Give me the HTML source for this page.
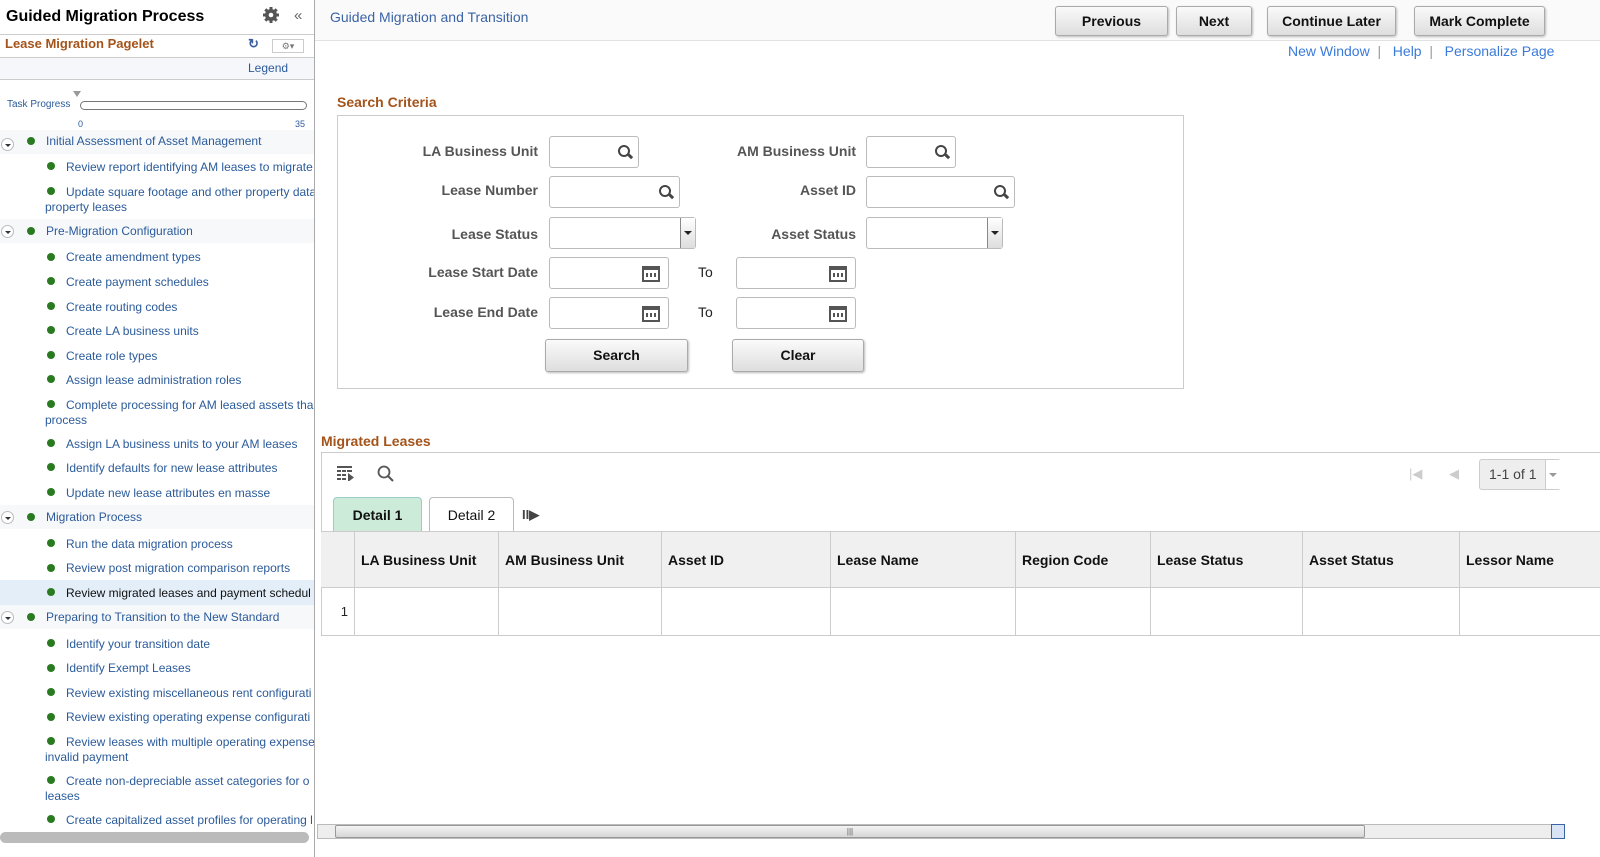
<!DOCTYPE html>
<html><head><meta charset="utf-8"><style>
*{box-sizing:border-box;margin:0;padding:0}
body{width:1600px;height:857px;position:relative;overflow:hidden;font-family:"Liberation Sans",Arial,sans-serif;background:#fff;color:#333}
.a{position:absolute}
.lt{font-size:12px;color:#2b5b9a;position:absolute;white-space:nowrap}
.dot{position:absolute;width:8px;height:8px;border-radius:50%;background:#2a7a22}
.sec{position:absolute;left:0;width:314px;height:24px;background:#f7f8fa}
.tog{position:absolute;left:1px;width:13px;height:13px;border:1px solid #bbb;border-radius:50%;background:#fff}
.tog:after{content:"";position:absolute;left:3px;top:5px;border-left:3px solid transparent;border-right:3px solid transparent;border-top:3px solid #333}
.btn{position:absolute;height:30px;border:1px solid #aaa;border-radius:3px;background:linear-gradient(#fafafa,#dedede);font-weight:bold;font-size:14px;color:#111;text-align:center;line-height:28px;box-shadow:1px 1px 2px #bbb}
.lbl{position:absolute;font-size:14px;font-weight:bold;color:#555;text-align:right}
.inp{position:absolute;height:32px;border:1px solid #bbb;border-radius:3px;background:#fff}
.sr{position:absolute;right:8px;top:8px;width:12px;height:12px;border:2.5px solid #444;border-radius:50%}
.sr:after{content:"";position:absolute;left:8px;top:8px;width:5px;height:2.5px;background:#444;transform:rotate(45deg)}
.cal{position:absolute;right:8px;top:8px;width:18px;height:16px;border:2px solid #555;border-top-width:4px;background:repeating-linear-gradient(90deg,#fff 0 2px,#555 2px 4px);background-clip:content-box;padding:3px 2px}
.dd{position:absolute;right:0;top:0;width:15px;height:30px;background:linear-gradient(#fff,#ddd);border-left:1px solid #888}
.dd:after{content:"";position:absolute;left:3px;top:13px;border-left:4px solid transparent;border-right:4px solid transparent;border-top:4px solid #222}
.th{position:absolute;top:532px;height:56px;border-right:1px solid #ccc;font-size:14px;font-weight:bold;color:#111;line-height:56px;padding-left:6px}
.td{position:absolute;top:588px;height:47px;border-right:1px solid #ccc}
.h{font-size:14px;font-weight:bold;color:#a4531a;position:absolute}
</style></head><body>
<!-- left panel -->
<div class="a" style="left:0;top:0;width:314px;height:857px;overflow:hidden">
<div class="a" style="left:6px;top:8px;font-size:16px;font-weight:bold;color:#000">Guided Migration Process</div>
<svg class="a" style="left:262px;top:6px" width="18" height="18" viewBox="0 0 18 18"><circle cx="9" cy="9" r="6" fill="#555"/><g stroke="#555" stroke-width="3"><line x1="9" y1="1" x2="9" y2="17"/><line x1="1" y1="9" x2="17" y2="9"/><line x1="3.3" y1="3.3" x2="14.7" y2="14.7"/><line x1="14.7" y1="3.3" x2="3.3" y2="14.7"/></g><circle cx="9" cy="9" r="2.3" fill="#fff"/></svg>
<div class="a" style="left:294px;top:7px;font-size:15px;color:#666">«</div>
<div class="a" style="left:0;top:34px;width:314px;height:24px;border-top:1px solid #ccc;border-bottom:1px solid #ccc;background:#fff"></div>
<div class="a" style="left:5px;top:36px;font-size:13px;font-weight:bold;color:#a4531a">Lease Migration Pagelet</div>
<div class="a" style="left:248px;top:36px;font-size:13px;color:#3a5ea0;font-weight:bold">↻</div>
<div class="a" style="left:272px;top:39px;width:32px;height:14px;border:1px solid #ccc;font-size:9px;color:#777;text-align:center;line-height:12px">⚙▾</div>
<div class="a" style="left:0;top:58px;width:314px;height:22px;background:#f5f7fa;border-bottom:1px solid #ccc"></div>
<div class="a" style="left:248px;top:61px;font-size:12px;color:#2b5b9a">Legend</div>
<div class="a" style="left:73px;top:91px;border-left:4px solid transparent;border-right:4px solid transparent;border-top:6px solid #999"></div>
<div class="a" style="left:7px;top:99px;font-size:10px;color:#2b5b9a">Task Progress</div>
<div class="a" style="left:80px;top:101px;width:227px;height:9px;border:1px solid #777;border-radius:5px"></div>
<div class="a" style="left:78px;top:119px;font-size:9px;color:#2b5b9a">0</div>
<div class="a" style="left:295px;top:119px;font-size:9px;color:#2b5b9a">35</div>
<div class="a" style="left:0;top:130px;width:314px;height:1px;background:#ddd"></div>

<div class="sec" style="top:130px"></div><div class="tog" style="top:138px"></div><div class="dot" style="left:27px;top:137px"></div><div class="lt" style="left:46px;top:134px">Initial Assessment of Asset Management</div>
<div class="dot" style="left:47px;top:162px"></div><div class="lt" style="left:66px;top:160px">Review report identifying AM leases to migrate</div>
<div class="dot" style="left:47px;top:187px"></div><div class="lt" style="left:66px;top:185px">Update square footage and other property data</div><div class="lt" style="left:45px;top:200px">property leases</div>
<div class="sec" style="top:219px"></div><div class="tog" style="top:225px"></div><div class="dot" style="left:27px;top:227px"></div><div class="lt" style="left:46px;top:224px">Pre-Migration Configuration</div>
<div class="dot" style="left:47px;top:253px"></div><div class="lt" style="left:66px;top:250px">Create amendment types</div>
<div class="dot" style="left:47px;top:277px"></div><div class="lt" style="left:66px;top:275px">Create payment schedules</div>
<div class="dot" style="left:47px;top:302px"></div><div class="lt" style="left:66px;top:300px">Create routing codes</div>
<div class="dot" style="left:47px;top:326px"></div><div class="lt" style="left:66px;top:324px">Create LA business units</div>
<div class="dot" style="left:47px;top:351px"></div><div class="lt" style="left:66px;top:349px">Create role types</div>
<div class="dot" style="left:47px;top:375px"></div><div class="lt" style="left:66px;top:373px">Assign lease administration roles</div>
<div class="dot" style="left:47px;top:400px"></div><div class="lt" style="left:66px;top:398px">Complete processing for AM leased assets tha</div><div class="lt" style="left:45px;top:413px">process</div>
<div class="dot" style="left:47px;top:439px"></div><div class="lt" style="left:66px;top:437px">Assign LA business units to your AM leases</div>
<div class="dot" style="left:47px;top:463px"></div><div class="lt" style="left:66px;top:461px">Identify defaults for new lease attributes</div>
<div class="dot" style="left:47px;top:488px"></div><div class="lt" style="left:66px;top:486px">Update new lease attributes en masse</div>
<div class="sec" style="top:505px"></div><div class="tog" style="top:511px"></div><div class="dot" style="left:27px;top:513px"></div><div class="lt" style="left:46px;top:510px">Migration Process</div>
<div class="dot" style="left:47px;top:539px"></div><div class="lt" style="left:66px;top:537px">Run the data migration process</div>
<div class="dot" style="left:47px;top:564px"></div><div class="lt" style="left:66px;top:561px">Review post migration comparison reports</div>
<div class="a" style="left:0;top:580px;width:314px;height:25px;background:#e3eef9"></div>
<div class="dot" style="left:47px;top:588px"></div><div class="lt" style="left:66px;top:586px;color:#111">Review migrated leases and payment schedul</div>
<div class="sec" style="top:605px"></div><div class="tog" style="top:611px"></div><div class="dot" style="left:27px;top:613px"></div><div class="lt" style="left:46px;top:610px">Preparing to Transition to the New Standard</div>
<div class="dot" style="left:47px;top:639px"></div><div class="lt" style="left:66px;top:637px">Identify your transition date</div>
<div class="dot" style="left:47px;top:664px"></div><div class="lt" style="left:66px;top:661px">Identify Exempt Leases</div>
<div class="dot" style="left:47px;top:688px"></div><div class="lt" style="left:66px;top:686px">Review existing miscellaneous rent configurati</div>
<div class="dot" style="left:47px;top:713px"></div><div class="lt" style="left:66px;top:710px">Review existing operating expense configurati</div>
<div class="dot" style="left:47px;top:737px"></div><div class="lt" style="left:66px;top:735px">Review leases with multiple operating expense</div><div class="lt" style="left:45px;top:750px">invalid payment</div>
<div class="dot" style="left:47px;top:776px"></div><div class="lt" style="left:66px;top:774px">Create non-depreciable asset categories for o</div><div class="lt" style="left:45px;top:789px">leases</div>
<div class="dot" style="left:47px;top:815px"></div><div class="lt" style="left:66px;top:813px">Create capitalized asset profiles for operating l</div>
<div class="a" style="left:0;top:831px;width:314px;height:26px;background:#fff"></div>
<div class="a" style="left:0;top:832px;width:309px;height:11px;background:#bbb;border-radius:6px"></div>
</div>
<div class="a" style="left:314px;top:0;width:1px;height:857px;background:#aaa"></div>

<!-- top bar -->
<div class="a" style="left:315px;top:0;width:1285px;height:41px;background:#fafafa;border-bottom:1px solid #e2e2e2"></div>
<div class="a" style="left:330px;top:9px;font-size:14px;color:#3a64a6">Guided Migration and Transition</div>
<div class="btn" style="left:1055px;top:6px;width:113px">Previous</div>
<div class="btn" style="left:1176px;top:6px;width:76px">Next</div>
<div class="btn" style="left:1267px;top:6px;width:129px">Continue Later</div>
<div class="btn" style="left:1414px;top:6px;width:131px">Mark Complete</div>
<div class="a" style="left:1288px;top:43px;font-size:14px;color:#3a7ad9;white-space:nowrap">New Window <span style="color:#999">&nbsp;|</span> &nbsp; Help <span style="color:#999">&nbsp;|</span> &nbsp; Personalize Page</div>

<!-- search criteria -->
<div class="h" style="left:337px;top:94px">Search Criteria</div>
<div class="a" style="left:337px;top:115px;width:847px;height:274px;border:1px solid #ccc"></div>
<div class="lbl" style="left:380px;top:143px;width:158px">LA Business Unit</div>
<div class="inp" style="left:549px;top:136px;width:90px"><div class="sr"></div></div>
<div class="lbl" style="left:700px;top:143px;width:156px">AM Business Unit</div>
<div class="inp" style="left:866px;top:136px;width:90px"><div class="sr"></div></div>
<div class="lbl" style="left:380px;top:182px;width:158px">Lease Number</div>
<div class="inp" style="left:549px;top:176px;width:131px"><div class="sr"></div></div>
<div class="lbl" style="left:700px;top:182px;width:156px">Asset ID</div>
<div class="inp" style="left:866px;top:176px;width:149px"><div class="sr"></div></div>
<div class="lbl" style="left:380px;top:226px;width:158px">Lease Status</div>
<div class="inp" style="left:549px;top:217px;width:147px;height:32px"><div class="dd"></div></div>
<div class="lbl" style="left:700px;top:226px;width:156px">Asset Status</div>
<div class="inp" style="left:866px;top:217px;width:137px;height:32px"><div class="dd"></div></div>
<div class="lbl" style="left:380px;top:264px;width:158px">Lease Start Date</div>
<div class="inp" style="left:549px;top:257px;width:120px"><div class="cal"></div></div>
<div class="a" style="left:698px;top:264px;font-size:14px;color:#222">To</div>
<div class="inp" style="left:736px;top:257px;width:120px"><div class="cal"></div></div>
<div class="lbl" style="left:380px;top:304px;width:158px">Lease End Date</div>
<div class="inp" style="left:549px;top:297px;width:120px"><div class="cal"></div></div>
<div class="a" style="left:698px;top:304px;font-size:14px;color:#222">To</div>
<div class="inp" style="left:736px;top:297px;width:120px"><div class="cal"></div></div>
<div class="btn" style="left:545px;top:339px;width:143px;height:33px;line-height:31px">Search</div>
<div class="btn" style="left:732px;top:339px;width:132px;height:33px;line-height:31px">Clear</div>

<!-- migrated leases -->
<div class="h" style="left:321px;top:433px">Migrated Leases</div>
<div class="a" style="left:321px;top:452px;width:1279px;height:184px;border:1px solid #ccc;border-right:none"></div>
<svg class="a" style="left:337px;top:465px" width="18" height="16" viewBox="0 0 18 16"><g fill="#555"><rect x="0" y="1" width="15" height="2"/><rect x="0" y="5" width="4" height="2"/><rect x="5" y="5" width="4" height="2"/><rect x="10" y="5" width="5" height="2"/><rect x="0" y="9" width="4" height="2"/><rect x="5" y="9" width="4" height="2"/><rect x="0" y="13" width="4" height="2"/><rect x="5" y="13" width="4" height="2"/><path d="M11 8l6 4.5-6 4.5z"/></g></svg>
<svg class="a" style="left:377px;top:465px" width="18" height="18" viewBox="0 0 18 18"><circle cx="7" cy="7" r="5.5" fill="none" stroke="#555" stroke-width="1.8"/><line x1="11" y1="11" x2="16" y2="16" stroke="#555" stroke-width="2"/></svg>
<div class="a" style="left:1409px;top:466px;font-size:13px;color:#ccc">|◀</div>
<div class="a" style="left:1449px;top:466px;font-size:13px;color:#ccc">◀</div>
<div class="a" style="left:1479px;top:459px;width:82px;height:31px;border:1px solid #ccc;border-radius:3px;background:#eee;font-size:14px;color:#444;line-height:29px;padding-left:9px">1-1 of 1</div>
<div class="a" style="left:1545px;top:460px;width:16px;height:29px;background:#fff;border-left:1px solid #ccc"></div>
<div class="a" style="left:1549px;top:473px;border-left:4px solid transparent;border-right:4px solid transparent;border-top:4px solid #999"></div>
<div class="a" style="left:333px;top:497px;width:89px;height:35px;background:#cdebd9;border:1px solid #9cc;border-bottom:none;border-radius:4px 4px 0 0;font-size:14px;font-weight:bold;color:#111;text-align:center;line-height:34px">Detail 1</div>
<div class="a" style="left:429px;top:497px;width:85px;height:35px;background:#fff;border:1px solid #bbb;border-bottom:none;border-radius:4px 4px 0 0;font-size:14px;color:#111;text-align:center;line-height:34px">Detail 2</div>
<div class="a" style="left:522px;top:507px;font-size:13px;color:#444;font-weight:bold">II▶</div>
<div class="a" style="left:321px;top:531px;width:1279px;height:57px;background:#f0f0f0;border-top:1px solid #ccc;border-bottom:1px solid #ccc"></div>
<div class="th" style="left:321px;width:34px"></div>
<div class="th" style="left:355px;width:144px">LA Business Unit</div>
<div class="th" style="left:499px;width:163px">AM Business Unit</div>
<div class="th" style="left:662px;width:169px">Asset ID</div>
<div class="th" style="left:831px;width:185px">Lease Name</div>
<div class="th" style="left:1016px;width:135px">Region Code</div>
<div class="th" style="left:1151px;width:152px">Lease Status</div>
<div class="th" style="left:1303px;width:157px">Asset Status</div>
<div class="th" style="left:1460px;width:140px;border:none">Lessor Name</div>
<div class="td" style="left:321px;width:34px;font-size:13px;color:#222;text-align:right;padding:16px 6px 0 0">1</div>
<div class="td" style="left:355px;width:144px"></div><div class="td" style="left:499px;width:163px"></div><div class="td" style="left:662px;width:169px"></div><div class="td" style="left:831px;width:185px"></div><div class="td" style="left:1016px;width:135px"></div><div class="td" style="left:1151px;width:152px"></div><div class="td" style="left:1303px;width:157px"></div>
<div class="a" style="left:321px;top:635px;width:1279px;height:1px;background:#ccc"></div>

<!-- bottom scrollbar -->
<div class="a" style="left:315px;top:822px;width:1285px;height:35px;background:#fff"></div>
<div class="a" style="left:317px;top:824px;width:1248px;height:15px;background:#eee;border:1px solid #bbb"></div>
<div class="a" style="left:335px;top:825px;width:1030px;height:13px;background:linear-gradient(#f4f4f4,#d6d6d6);border:1px solid #999;border-radius:2px;font-size:8px;text-align:center;line-height:11px;color:#555">|||</div>
<div class="a" style="left:1551px;top:824px;width:14px;height:15px;background:#d8e4f4;border:1px solid #3a64a6"></div>
</body></html>
